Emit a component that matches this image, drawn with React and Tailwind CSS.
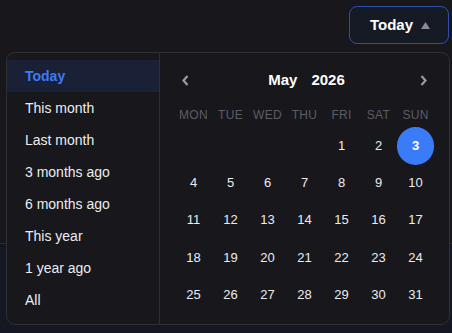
import React from "react";

const presets = ["Today", "This month", "Last month", "3 months ago", "6 months ago", "This year", "1 year ago", "All"];
const weekdays = ["MON", "TUE", "WED", "THU", "FRI", "SAT", "SUN"];

export default function App() {
  const cells = [];
  for (let i = 0; i < 4; i++) cells.push(null);
  for (let d = 1; d <= 31; d++) cells.push(d);

  return (
    <div className="relative w-[452px] h-[333px] overflow-hidden bg-[#17171c] flex flex-col" style={{ fontFamily: '"Liberation Sans", Arial, sans-serif' }}>
      <div className="h-[243px] flex justify-end items-start pt-[6px] pr-[3px]">
        <button className="w-[100px] h-[38px] rounded-[8px] border border-[#2c4fb0] bg-[#161a25] flex items-center justify-center gap-[8px] pl-[2px]">
          <span className="text-[15px] font-bold text-white">Today</span>
          <svg width="9" height="7" viewBox="0 0 9 7"><path d="M4.5 0 L9 7 L0 7 Z" fill="#8b8b95" /></svg>
        </button>
      </div>
      <div className="flex-1 border-t border-[#1f2a48] bg-[#151823]" />

      <div className="absolute left-[6px] top-[52px] w-[444px] h-[273px] rounded-[9px] border border-[#2e2e35] bg-[#17171c] flex overflow-hidden">
        <div className="w-[153px] border-r border-[#2e2e35] py-[7px] flex flex-col">
          {presets.map((p, i) => (
            <div key={p} className={"h-[32px] flex items-center pl-[18px] text-[14px] " + (i === 0 ? "bg-[#1a2035] text-[#3b7cf6] font-bold" : "text-[#ececf0]")}>
              {p}
            </div>
          ))}
        </div>
        <div className="flex-1 px-[15px] pt-[14px]">
          <div className="h-[26px] flex items-center justify-between px-[7px]">
            <svg width="7" height="11" viewBox="0 0 7 11"><path d="M5.5 1 L1.5 5.5 L5.5 10" stroke="#9a9aa4" strokeWidth="2.2" fill="none" /></svg>
            <div className="flex gap-[14px] text-[15px] font-bold text-white pl-[4px]">
              <span>May</span>
              <span>2026</span>
            </div>
            <svg width="7" height="11" viewBox="0 0 7 11"><path d="M1.5 1 L5.5 5.5 L1.5 10" stroke="#9a9aa4" strokeWidth="2.2" fill="none" /></svg>
          </div>
          <div className="grid grid-cols-7 mt-[14px]">
            {weekdays.map((w) => (
              <div key={w} className="h-[16px] flex items-center justify-center text-[12px] text-[#5d5d66] tracking-[0.3px]">{w}</div>
            ))}
          </div>
          <div className="grid grid-cols-7 mt-[4px]">
            {cells.map((d, i) => (
              <div key={i} className="h-[37.25px] flex items-center justify-center">
                {d === 3 ? (
                  <div className="w-[38px] h-[38px] rounded-full bg-[#3a7cf7] flex items-center justify-center text-[13px] font-bold text-white">3</div>
                ) : (
                  <span className="text-[13px] text-[#ececf0]">{d}</span>
                )}
              </div>
            ))}
          </div>
        </div>
      </div>
    </div>
  );
}
